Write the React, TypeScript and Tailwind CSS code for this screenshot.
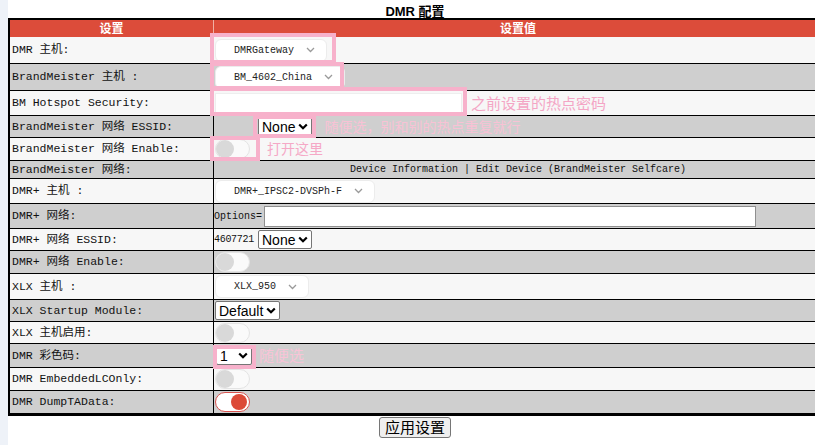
import type { ReactNode } from 'react'

const mono = "font-['Liberation_Mono','Noto_Sans_CJK_SC',monospace]"
const sans = "font-['Liberation_Sans','Noto_Sans_CJK_SC',sans-serif]"

function ThinChevron() {
  return (
    <svg width="9" height="6" viewBox="0 0 9 6" className="shrink-0">
      <polyline points="1,1 4.5,4.5 8,1" fill="none" stroke="#9a9a9a" strokeWidth="1.3" />
    </svg>
  )
}

function BoldChevron() {
  return (
    <svg width="10" height="7" viewBox="0 0 10 7" className="shrink-0">
      <polyline points="1.2,1.5 5,5.2 8.8,1.5" fill="none" stroke="#000" strokeWidth="2.2" />
    </svg>
  )
}

// rounded "nice select" style dropdown
function FancySelect({ value }: { value: string }) {
  return (
    <div
      className={`ml-[1px] inline-flex h-[23px] items-center gap-[12px] rounded-[6px] border border-[#ececec] bg-white pl-[18px] pr-[11px] text-[10px] text-[#222] ${mono}`}
    >
      <span>{value}</span>
      <ThinChevron />
    </div>
  )
}

// plain browser-looking select
function NativeSelect({ value, className = '' }: { value: string; className?: string }) {
  return (
    <div
      className={`inline-flex h-[19px] items-center gap-[3px] rounded-[2px] border border-[#767676] bg-white pl-[3px] pr-[3px] text-[14px] leading-none text-black ${sans} ${className}`}
    >
      <span>{value}</span>
      <BoldChevron />
    </div>
  )
}

function Toggle({ on = false }: { on?: boolean }) {
  return on ? (
    <div className="ml-[1px] flex h-[20px] w-[35px] items-center justify-end rounded-full border border-[#d9534f] bg-white pr-[2px]">
      <div className="h-[16px] w-[16px] rounded-full bg-[#dc4a38]" />
    </div>
  ) : (
    <div className="ml-[1px] flex h-[20px] w-[35px] items-center rounded-full border border-[#e4e4e4] bg-[#fafafa]">
      <div className="h-[18px] w-[18px] rounded-full bg-[#d9d9d9]" />
    </div>
  )
}

function Note({ text, className = '' }: { text: string; className?: string }) {
  return (
    <span className={`whitespace-nowrap text-[14px] leading-none ${sans} ${className}`}>{text}</span>
  )
}

interface RowProps {
  label: string
  h: string
  gray: boolean
  last?: boolean
  children?: ReactNode
}

function Row({ label, h, gray, last, children }: RowProps) {
  return (
    <div
      className={`flex ${h} ${gray ? 'bg-[#cfcfcf]' : 'bg-[#f7f7f7]'} ${last ? '' : 'border-b border-black'}`}
    >
      <div
        className={`flex w-[204px] shrink-0 items-center whitespace-nowrap border-r border-black pl-[2px] text-[11.5px] text-[#111] ${mono}`}
      >
        {label}
      </div>
      <div className="flex min-w-0 flex-1 items-center">{children}</div>
    </div>
  )
}

const boxes = [
  'left-[210px] top-[33px] w-[126px] h-[31px]',
  'left-[210px] top-[62px] w-[134px] h-[28px]',
  'left-[210px] top-[87px] w-[257px] h-[29px]',
  'left-[253px] top-[115px] w-[63px] h-[23px]',
  'left-[210px] top-[136px] w-[50px] h-[25px]',
  'left-[213px] top-[345px] w-[43px] h-[24px]',
]

export default function App() {
  return (
    <div className="relative flex h-[445px] w-[815px] overflow-hidden bg-white">
      <div className="w-2 shrink-0 bg-[#eef2f8]" />
      <div className="w-[814px] shrink-0">
        <div className={`h-[18px] text-center text-[13px] font-bold leading-[24px] text-black ${sans}`}>
          DMR 配置
        </div>
        <div className="border-b-[3px] border-l-2 border-t-2 border-black">
          <div className={`flex h-[17px] bg-[#dc4c3a] text-[12px] font-bold text-white ${sans}`}>
            <div className="flex w-[204px] shrink-0 items-center justify-center border-r border-[#f0b0a4]">
              设置
            </div>
            <div className="flex flex-1 items-center justify-center">设置值</div>
          </div>

          <Row label="DMR 主机:" h="h-[27px]" gray={false}>
            <FancySelect value="DMRGateway" />
          </Row>
          <Row label="BrandMeister 主机 :" h="h-[27px]" gray>
            <FancySelect value="BM_4602_China" />
          </Row>
          <Row label="BM Hotspot Security:" h="h-[25px]" gray={false}>
            <div className="ml-[1px] h-[20px] w-[247px] border border-[#eeeeee] bg-white" />
            <Note text="之前设置的热点密码" className="ml-[9px] text-[15px] text-[#f4a5c5]" />
          </Row>
          <Row label="BrandMeister 网络 ESSID:" h="h-[22px]" gray>
            <span className="w-[44px] shrink-0" />
            <NativeSelect value="None" />
            <Note text="随便选，别和别的热点重复就行" className="ml-[12px] text-[#f8c2d5]" />
          </Row>
          <Row label="BrandMeister 网络 Enable:" h="h-[23px]" gray={false}>
            <Toggle />
            <Note text="打开这里" className="ml-[17px] text-[#f5a8c6]" />
          </Row>
          <Row label="BrandMeister 网络:" h="h-[18px]" gray>
            <div className={`w-full text-center text-[10px] text-[#111] ${mono}`}>
              Device Information | Edit Device (BrandMeister Selfcare)
            </div>
          </Row>
          <Row label="DMR+ 主机 :" h="h-[25px]" gray={false}>
            <FancySelect value="DMR+_IPSC2-DVSPh-F" />
          </Row>
          <Row label="DMR+ 网络:" h="h-[25px]" gray>
            <span className={`text-[10px] text-[#111] ${mono}`}>Options=</span>
            <div className="ml-[2px] h-[21px] w-[492px] border border-[#8f8f8f] bg-white" />
          </Row>
          <Row label="DMR+ 网络 ESSID:" h="h-[22px]" gray={false}>
            <span className={`w-[44px] shrink-0 text-[10px] tracking-[-0.3px] text-[#111] ${mono}`}>
              4607721
            </span>
            <NativeSelect value="None" />
          </Row>
          <Row label="DMR+ 网络 Enable:" h="h-[23px]" gray>
            <Toggle />
          </Row>
          <Row label="XLX 主机 :" h="h-[26px]" gray={false}>
            <FancySelect value="XLX_950" />
          </Row>
          <Row label="XLX Startup Module:" h="h-[22px]" gray>
            <NativeSelect value="Default" className="ml-[1px]" />
          </Row>
          <Row label="XLX 主机启用:" h="h-[22px]" gray={false}>
            <Toggle />
          </Row>
          <Row label="DMR 彩色码:" h="h-[24px]" gray>
            <NativeSelect value="1" className="ml-[2px] w-[36px] justify-between" />
            <Note text="随便选" className="ml-[7px] text-[15px] text-[#f8c4d7]" />
          </Row>
          <Row label="DMR EmbeddedLCOnly:" h="h-[23px]" gray={false}>
            <Toggle />
          </Row>
          <Row label="DMR DumpTAData:" h="h-[22px]" gray last>
            <Toggle on />
          </Row>
        </div>
        <div className="flex justify-center pt-[1px]">
          <button
            className={`h-[21px] rounded-[3px] border border-[#767676] bg-[#efefef] px-[5px] text-[15px] leading-none text-black ${sans}`}
          >
            应用设置
          </button>
        </div>
      </div>

      {/* pink annotation frames drawn over the screenshot */}
      {boxes.map((b) => (
        <div key={b} className={`pointer-events-none absolute border-4 border-[#f7b1cb] ${b}`} />
      ))}
    </div>
  )
}
